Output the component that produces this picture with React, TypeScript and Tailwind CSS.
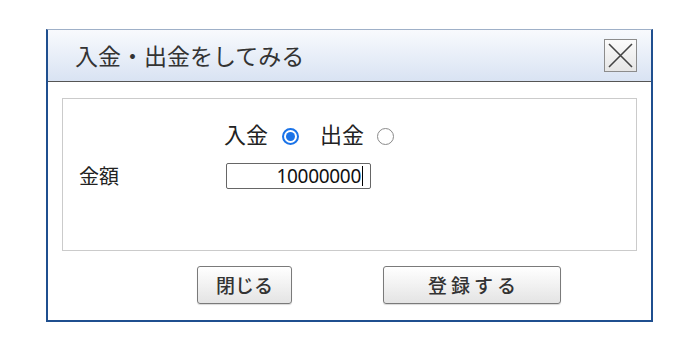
import React from 'react';

const jp = { fontFamily: '"Noto Sans CJK JP", "Noto Sans", sans-serif' };

function Radio({ checked }: { checked?: boolean }) {
  return checked ? (
    <span className="mt-[6px] flex h-[17px] w-[17px] items-center justify-center rounded-full border-2 border-[#1a73e8] bg-white">
      <span className="h-[9px] w-[9px] rounded-full bg-[#1a73e8]" />
    </span>
  ) : (
    <span className="mt-[6px] block h-[17px] w-[17px] rounded-full border-[1.5px] border-[#8a8a8a] bg-white" />
  );
}

export default function App() {
  return (
    <div className="min-h-[350px] w-[700px] bg-white pl-[46px] pt-[29px]" style={jp}>
      <div className="flex h-[293px] w-[607px] flex-col border-2 border-t border-[#1f4f8f] border-t-[#9fb0c8]">
        <div className="flex h-[52px] shrink-0 items-center justify-between border-b border-[#555] bg-gradient-to-b from-[#f8fafd] to-[#d9e3f3] pl-[27px] pr-[14px]">
          <h1 className="text-[23px] leading-none text-[#333]">入金・出金をしてみる</h1>
          <button className="flex h-[33px] w-[33px] items-center justify-center border border-[#8c8c8c] bg-gradient-to-b from-[#fbfbfb] to-[#e6e6e6]">
            <svg width="27" height="27" viewBox="0 0 27 27">
              <path d="M2 2 L25 25 M25 2 L2 25" stroke="#444" strokeWidth="1.6" />
            </svg>
          </button>
        </div>

        <div className="flex flex-1 flex-col px-[14px] pt-[16px]">
          <div className="h-[153px] border border-[#cbcbcb]">
            <div className="flex items-center pl-[161px] pt-[19px] text-[22px] leading-[30px] text-[#222]">
              <span>入金</span>
              <span className="ml-[14px]"><Radio checked /></span>
              <span className="ml-[21px]">出金</span>
              <span className="ml-[13px]"><Radio /></span>
            </div>
            <div className="mt-[13px] flex items-center pl-[16px]">
              <span className="w-[147px] text-[20px] text-[#222]">金額</span>
              <div className="flex h-[26px] w-[145px] items-center justify-end rounded-[2px] border border-[#666] pr-[7px] text-[19px] text-[#111]" style={{ fontFamily: '"Noto Sans", sans-serif' }}>
                <span className="tracking-[-0.3px]">10000000</span>
                <span className="ml-[1px] h-[20px] w-[1px] bg-black" />
              </div>
            </div>
          </div>

          <div className="mt-[15px] flex pl-[135px]">
            <button className="h-[38px] w-[95px] rounded-[3px] border border-[#7a7a7a] bg-gradient-to-b from-[#ffffff] to-[#e4e4e4] text-[19px] font-medium text-[#333] shadow-[0_1px_1px_rgba(0,0,0,0.15)]">
              閉じる
            </button>
            <button className="ml-[91px] h-[38px] w-[178px] rounded-[3px] border border-[#7a7a7a] bg-gradient-to-b from-[#ffffff] to-[#e4e4e4] pl-[4px] text-[19px] font-medium tracking-[4px] text-[#333] shadow-[0_1px_1px_rgba(0,0,0,0.15)]">
              登録する
            </button>
          </div>
        </div>
      </div>
    </div>
  );
}
